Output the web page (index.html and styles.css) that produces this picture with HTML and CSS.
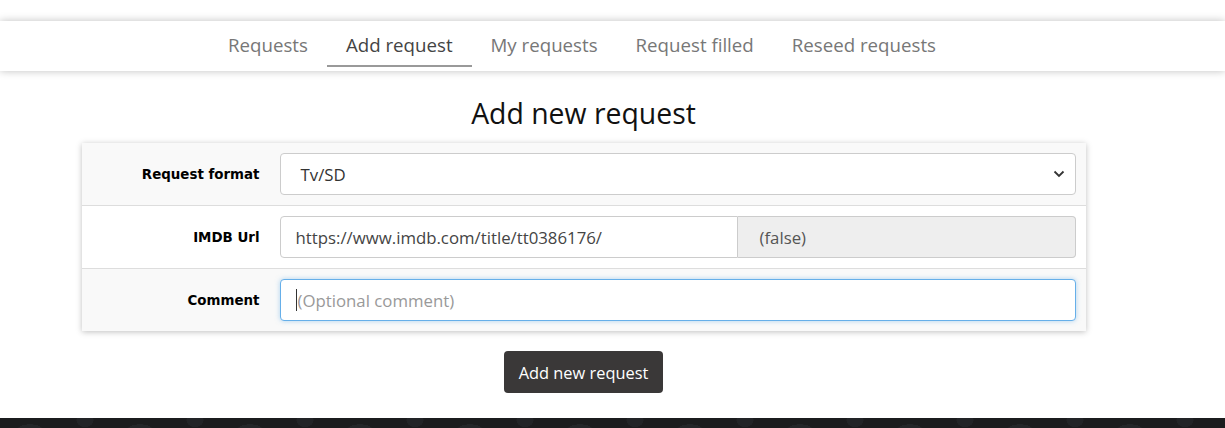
FILE: index.html
```html
<!DOCTYPE html>
<html>
<head>
<meta charset="utf-8">
<link rel="stylesheet" href="styles.css">
</head>
<body>
<div class="top-space"></div>
<nav class="tabs">
  <a class="tab">Requests</a>
  <a class="tab active">Add request</a>
  <a class="tab">My requests</a>
  <a class="tab">Request filled</a>
  <a class="tab">Reseed requests</a>
</nav>
<main class="content">
  <h1 class="title">Add new request</h1>
  <div class="form-table">
    <div class="row striped">
      <div class="label">Request format</div>
      <div class="field">
        <div class="select">
          <span>Tv/SD</span>
          <svg class="chev" width="12" height="8" viewBox="0 0 12 8"><path d="M1.5 1.5 L6 6 L10.5 1.5" fill="none" stroke="#333" stroke-width="1.8"/></svg>
        </div>
      </div>
    </div>
    <div class="row">
      <div class="label">IMDB Url</div>
      <div class="field">
        <div class="group">
          <div class="input">https://www.imdb.com/title/tt0386176/</div>
          <div class="addon">(false)</div>
        </div>
      </div>
    </div>
    <div class="row striped">
      <div class="label">Comment</div>
      <div class="field">
        <div class="input focus"><span class="caret"></span><span class="ph">(Optional comment)</span></div>
      </div>
    </div>
  </div>
  <div class="actions"><button class="btn">Add new request</button></div>
</main>
<footer class="footer"></footer>
</body>
</html>
```
FILE: styles.css
```css
html, body { margin: 0; padding: 0; background: #fff; }
body { font-family: "Open Sans", "Noto Sans", sans-serif; color: #333; height: 428px; overflow: hidden; display: flex; flex-direction: column; }
.top-space { height: 21px; background: #fff; }
.tabs { height: 50px; background: #fff; box-shadow: 0 0 8px rgba(0,0,0,0.25); display: flex; justify-content: center; position: relative; z-index: 1; padding-right: 61px; box-sizing: border-box; }
.tab { display: block; padding: 0 19px; font-size: 18.7px; line-height: 48px; color: #777; border-bottom: 2px solid transparent; height: 44px; }
.tab.active { color: #444; border-bottom-color: #999; }
.content { flex: 1; display: flex; flex-direction: column; align-items: center; padding-right: 58px; }
.title { margin: 24px 0 12px; font-weight: normal; font-size: 28.4px; line-height: 36px; color: #111; }
.form-table { width: 1004px; box-shadow: 0 1px 6px rgba(0,0,0,0.25); }
.row { display: flex; align-items: center; height: 62px; border-top: 1px solid #ddd; background: #fff; }
.row:first-child { border-top: none; }
.row.striped { background: #f9f9f9; }
.label { width: 178px; text-align: right; font-family: "DejaVu Sans", sans-serif; font-weight: bold; font-size: 13.4px; color: #000; padding-right: 20px; }
.field { flex: 1; padding-right: 10px; }
.select, .input, .addon { height: 42px; box-sizing: border-box; border: 1px solid #ccc; border-radius: 4px; background: #fff; font-size: 16.8px; display: flex; align-items: center; padding: 0 20px; color: #555; }
.select { justify-content: space-between; padding-right: 10px; color: #333; }
.group { display: flex; }
.group .input { width: 458px; border-radius: 4px 0 0 4px; padding-left: 15px; color: #444; }
.group .addon { flex: 1; background: #eee; border-left: none; border-radius: 0 4px 4px 0; padding-left: 22px; }
.input.focus { border-color: #66afe9; box-shadow: 0 0 5px rgba(102,175,233,0.5); padding-left: 15px; }
.caret { width: 1px; height: 22px; background: #333; margin-right: 1px; }
.ph { color: #999; }
.actions { margin-top: 20px; }
.btn { background: #3a3838; color: #fff; border: none; border-radius: 4px; height: 42px; padding: 0 15px; font-family: "Open Sans", sans-serif; font-size: 16.4px; }
.footer { height: 10px; margin-top: auto; background-color: #1b1c1e; background-image: radial-gradient(ellipse 18px 8px at 30px 12px, #232528 0 70%, transparent 72%), radial-gradient(ellipse 12px 10px at 85px 2px, #222427 0 70%, transparent 72%); background-size: 110px 20px; }
```
